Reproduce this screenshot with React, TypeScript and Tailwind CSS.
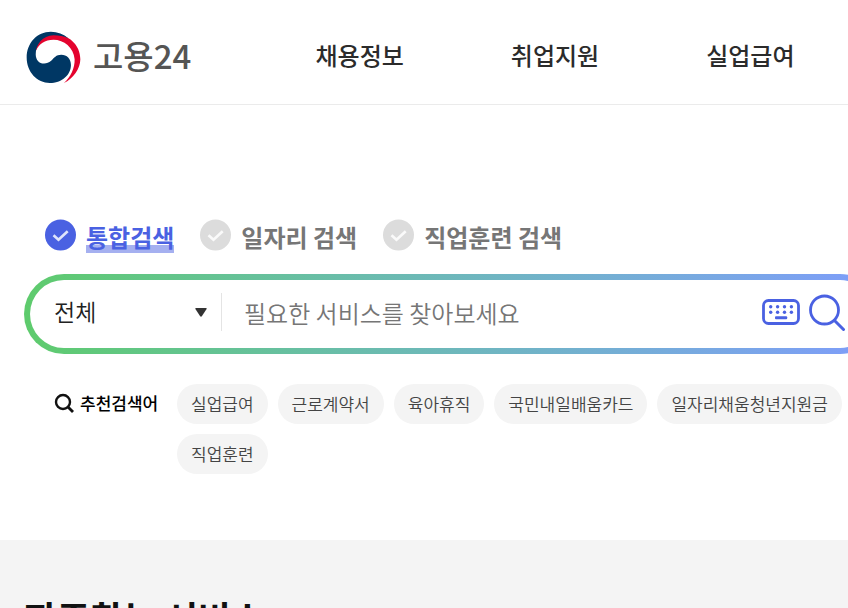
import { useState } from "react";

const menus = ["채용정보", "취업지원", "실업급여"];
const scopes = ["통합검색", "일자리 검색", "직업훈련 검색"];
const keywords = ["실업급여", "근로계약서", "육아휴직", "국민내일배움카드", "일자리채움청년지원금", "직업훈련"];

function Emblem() {
  return (
    <svg viewBox="78 62 164 158" className="h-[53px] w-[55px]" aria-hidden="true">
      <path
        fill="#e4032e"
        d="M107 122C107 92 128 71 158 71C203 70 240 102 240 146C240 174 219 204 191 217C211 199 224 172 223 146C220 111 191 88 160 88C134 88 117 100 107 122Z"
      />
      <path
        fill="#003764"
        d="M205 84C190 71 172 64 152 64C111 64 80 98 80 141C80 184 111 217 149 217C184 217 212 193 212 163C212 145 200 133 183 133C168 133 162 142 153 151C146 157 140 159 132 159C117 159 107 148 107 131C107 102 128 76 160 75C177 75 192 78 205 84Z"
      />
    </svg>
  );
}

function CheckMark({ active }: { active: boolean }) {
  return (
    <svg viewBox="0 0 32 32" className="size-8" aria-hidden="true">
      <circle cx="16.500" cy="16" r="15.500" fill={active ? "#4a61e2" : "#dcdcdc"} />
      <path d="M9.500 16.200l5 4.600 9.200-8.600" fill="none" stroke={active ? "#dfe4fb" : "#fafafa"} strokeWidth="2.600" />
    </svg>
  );
}

function KeyboardIcon() {
  return (
    <svg viewBox="0 0 38 26" className="h-[26px] w-[38px]" fill="#4a61e2" aria-hidden="true">
      <rect x="1.5" y="1.5" width="35" height="23" rx="5" fill="none" stroke="#4a61e2" strokeWidth="2.8" />
      {[8.7, 15.6, 22.5, 29.4].map((x) => (
        <g key={x}>
          <circle cx={x} cy="7.7" r="1.7" />
          <circle cx={x} cy="13.2" r="1.7" />
        </g>
      ))}
      <rect x="13" y="17.3" width="12.2" height="3" rx="1" />
    </svg>
  );
}

export default function App() {
  const [scope, setScope] = useState(0);
  return (
    <div className="overflow-hidden bg-white font-['Noto_Sans_CJK_KR',sans-serif] text-[#222]">
      <header className="flex h-[105px] items-center border-b border-[#ebebeb] pl-[26px]">
        <a href="#home" className="flex w-[236px] shrink-0 items-center gap-3 pt-[10px]">
          <Emblem />
          <span className="pb-1 text-[33px] leading-[48px] font-medium whitespace-nowrap text-[#555554]">
            고용24
          </span>
        </a>
        <nav className="grid flex-1 grid-cols-3 pt-[6px]">
          {menus.map((menu) => (
            <a key={menu} href="#menu" className="text-center text-2xl font-medium whitespace-nowrap text-[#2b2b2b]">
              {menu}
            </a>
          ))}
        </nav>
      </header>

      <main>
        <section className="h-[435px] pt-[112px]">
          <fieldset className="flex gap-[25px] pl-11" aria-label="검색 구분">
            {scopes.map((name, i) => (
              <label key={name} className="flex cursor-pointer items-center gap-[10px]">
                <input
                  type="radio"
                  name="scope"
                  checked={scope === i}
                  onChange={() => setScope(i)}
                  className="sr-only"
                />
                <CheckMark active={scope === i} />
                <span
                  className={
                    scope === i
                      ? "mt-1 bg-[linear-gradient(#a5b0f0,#a5b0f0)] bg-[length:100%_8px] bg-bottom bg-no-repeat text-2xl font-bold whitespace-nowrap text-[#4a61e2]"
                      : "mt-1 text-2xl font-bold whitespace-nowrap text-[#767676]"
                  }
                >
                  {name}
                </span>
              </label>
            ))}
          </fieldset>

          <form
            className="mt-[21px] -mr-8 ml-6 rounded-full bg-linear-to-r from-[#5ecb6c] to-[#7f9cfb] p-[6px]"
            onSubmit={(e) => e.preventDefault()}
          >
            <div className="flex h-[68px] items-center rounded-full bg-white pr-[28px] pb-1 pl-6">
              <div className="grid w-[168px] shrink-0 items-center border-r border-[#e4e4e4]">
                <select
                  aria-label="검색 범위"
                  className="col-start-1 row-start-1 h-[38px] w-full appearance-none bg-transparent pb-[2px] text-[23px] leading-[36px] font-[350] outline-none"
                >
                  <option>전체</option>
                  <option>채용정보</option>
                </select>
                <svg
                  viewBox="0 0 12 9"
                  className="pointer-events-none col-start-1 row-start-1 mr-[14px] h-[9px] w-3 justify-self-end"
                  aria-hidden="true"
                >
                  <path d="M1 0h10q1 0 .6 1L7 8q-1 1.400-2 0L.4 1Q0 0 1 0Z" fill="#333" />
                </svg>
              </div>
              <input
                type="text"
                aria-label="검색어"
                placeholder="필요한 서비스를 찾아보세요"
                className="min-w-0 flex-1 pt-[2px] pl-[22px] text-2xl font-[350] outline-none placeholder:text-[#767676]"
              />
              <button type="button" aria-label="가상 키보드">
                <KeyboardIcon />
              </button>
              <button type="submit" aria-label="검색" className="ml-2">
                <svg viewBox="0 0 38 38" className="size-[38px]" fill="none" stroke="#4a61e2" aria-hidden="true">
                  <circle cx="16.500" cy="17" r="14" strokeWidth="2.800" />
                  <path d="M26.500 27.500l9 9" strokeWidth="3" strokeLinecap="round" />
                </svg>
              </button>
            </div>
          </form>

          <div className="mt-[30px] flex pl-[54px]">
            <h2 className="flex h-10 w-[123px] shrink-0 items-center gap-[6px] pb-[2px] text-[17px] font-medium whitespace-nowrap text-black">
              <svg viewBox="0 0 20 20" className="size-5" fill="none" stroke="#111" aria-hidden="true">
                <circle cx="9" cy="9" r="7" strokeWidth="2.400" />
                <path d="M14 14l5 5" strokeWidth="2.800" />
              </svg>
              추천검색어
            </h2>
            <ul className="flex flex-wrap gap-[10px]">
              {keywords.map((word) => (
                <li key={word}>
                  <a
                    href="#keyword"
                    className="flex h-10 items-center rounded-full bg-[#f4f4f4] px-[14px] text-[17px] font-[350] whitespace-nowrap text-[#444]"
                  >
                    {word}
                  </a>
                </li>
              ))}
            </ul>
          </div>
        </section>

        <section className="bg-[#f4f4f4] px-6 pt-[47px] pb-10">
          <h2 className="text-4xl leading-[60px] font-bold whitespace-nowrap text-[#111]">자주찾는 서비스</h2>
        </section>
      </main>
    </div>
  );
}
